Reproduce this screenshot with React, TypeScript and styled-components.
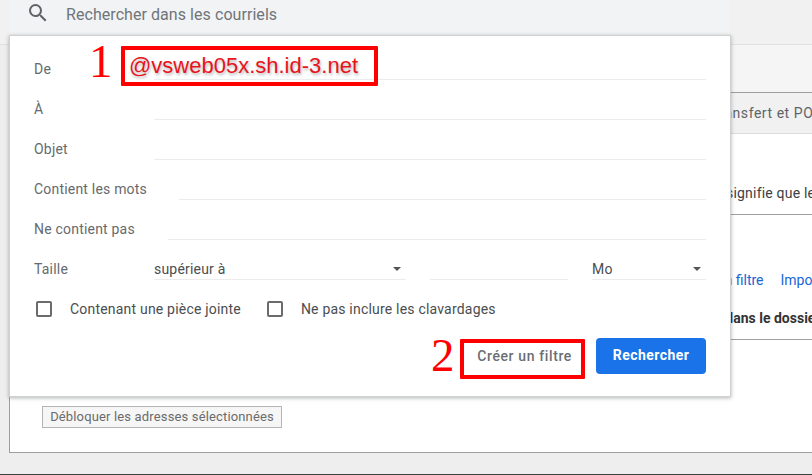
import React from 'react';
import styled, { createGlobalStyle } from 'styled-components';

const GlobalStyle = createGlobalStyle`
	html, body {
		margin: 0;
		padding: 0;
		background: #eeeeee;
		overflow: hidden;
	}
	* {
		box-sizing: border-box;
	}
`;

const SearchIcon = () => (
	<svg width="24" height="24" viewBox="0 0 24 24" fill="#5f6368">
		<path d="M15.5 14h-.79l-.28-.27A6.47 6.47 0 0 0 16 9.5 6.5 6.5 0 1 0 9.5 16c1.61 0 3.09-.59 4.23-1.57l.27.28v.79l5 4.99L20.49 19l-4.99-5zm-6 0C7.01 14 5 11.99 5 9.5S7.01 5 9.5 5 14 7.01 14 9.5 11.99 14 9.5 14z" />
	</svg>
);

const App = () => {
	return (
		<Page>
			<GlobalStyle />
			<TopBand>
				<SearchBar>
					<SearchIcon />
					<SearchText>Rechercher dans les courriels</SearchText>
				</SearchBar>
			</TopBand>
			<HeaderBand />
			<TabRow>
				<TabLabel>Transfert et POP</TabLabel>
			</TabRow>
			<SettingsCard>
				<InfoRow>
					<InfoText>Cela signifie que les messages</InfoText>
				</InfoRow>
				<FilterLinks>
					<LinkText>Créer un filtre</LinkText>
					<LinkText>Importer des filtres</LinkText>
				</FilterLinks>
				<BoldRow>
					<BoldText>Les messages sont placés dans le dossier</BoldText>
				</BoldRow>
				<UnblockArea>
					<UnblockButton>Débloquer les adresses sélectionnées</UnblockButton>
				</UnblockArea>
			</SettingsCard>
			<BottomBar />

			<Popup>
				<FormRow>
					<FieldLabel>De</FieldLabel>
					<FieldLine $left={120} />
				</FormRow>
				<FormRow>
					<FieldLabel>À</FieldLabel>
					<FieldLine $left={120} />
				</FormRow>
				<FormRow>
					<FieldLabel>Objet</FieldLabel>
					<FieldLine $left={120} />
				</FormRow>
				<FormRow>
					<FieldLabel>Contient les mots</FieldLabel>
					<FieldLine $left={145} />
				</FormRow>
				<FormRow>
					<FieldLabel>Ne contient pas</FieldLabel>
					<FieldLine $left={134} />
				</FormRow>
				<FormRow>
					<FieldLabel>Taille</FieldLabel>
					<SizeFields>
						<SelectBox $width={252}>
							supérieur à
							<Caret />
						</SelectBox>
						<SizeInput />
						<SelectBox $width={114}>
							Mo
							<Caret />
						</SelectBox>
					</SizeFields>
				</FormRow>
				<CheckRow>
					<CheckBox />
					<CheckLabel>Contenant une pièce jointe</CheckLabel>
					<CheckBox />
					<CheckLabel>Ne pas inclure les clavardages</CheckLabel>
				</CheckRow>
				<ActionRow>
					<CreateFilter>Créer un filtre</CreateFilter>
					<SearchButton>Rechercher</SearchButton>
				</ActionRow>
			</Popup>

			<Numeral $x={89} $y={34} $size={47}>1</Numeral>
			<RedBox $x={121} $y={46} $w={257} $h={40} />
			<Address>@vsweb05x.sh.id-3.net</Address>
			<Numeral $x={431} $y={328} $size={47}>2</Numeral>
			<RedBox $x={460} $y={339} $w={125} $h={40} />
		</Page>
	);
};

export default App;

const Page = styled.div({
	position: 'relative',
	width: '812px',
	height: '475px',
	overflow: 'hidden',
	background: '#eeeeee',
	borderBottom: '1px solid #3c4043',
	fontFamily: 'Roboto, "Liberation Sans", sans-serif',
	display: 'flex',
	flexDirection: 'column',
});

const TopBand = styled.div({
	height: '45px',
	flexShrink: 0,
	paddingLeft: '9px',
	background: '#f1f1f1',
	borderBottom: '1px solid #e0e0e0',
});

const SearchBar = styled.div({
	width: '721px',
	height: '44px',
	background: '#f1f3f4',
	display: 'flex',
	alignItems: 'flex-start',
	paddingLeft: '17px',
	paddingTop: '1px',
	gap: '16px',
});

const SearchText = styled.span({
	fontSize: '16px',
	lineHeight: '27px',
	color: '#70757a',
	letterSpacing: '0.06px',
});

const HeaderBand = styled.div({
	height: '48px',
	flexShrink: 0,
	marginLeft: '9px',
	background: '#f5f5f5',
	borderBottom: '1px solid #9e9e9e',
});

const TabRow = styled.div({
	height: '41px',
	flexShrink: 0,
	marginLeft: '9px',
	background: '#f1f1f1',
	borderBottom: '1px solid #dcdcdc',
	display: 'flex',
	alignItems: 'center',
	paddingLeft: '702px',
});

const TabLabel = styled.span({
	fontSize: '14px',
	whiteSpace: 'nowrap',
	color: '#5f6368',
	letterSpacing: '0.55px',
});

const SettingsCard = styled.div({
	height: '319px',
	flexShrink: 0,
	marginLeft: '9px',
	background: '#ffffff',
	borderBottom: '1px solid #9e9e9e',
	borderLeft: '1px solid #9e9e9e',
	display: 'flex',
	flexDirection: 'column',
});

const InfoRow = styled.div({
	height: '81px',
	flexShrink: 0,
	paddingLeft: '684px',
	paddingTop: '49px',
	borderBottom: '1px solid #a0a0a0',
});

const InfoText = styled.span({
	fontSize: '14px',
	lineHeight: '20px',
	whiteSpace: 'nowrap',
	color: '#3c4043',
	letterSpacing: '0.2px',
	display: 'block',
});

const FilterLinks = styled.div({
	height: '60px',
	flexShrink: 0,
	paddingLeft: '670px',
	paddingTop: '55px',
	display: 'flex',
	gap: '17px',
	whiteSpace: 'nowrap',
});

const LinkText = styled.span({
	fontSize: '14px',
	lineHeight: '20px',
	color: '#1a64d6',
});

const BoldRow = styled.div({
	height: '65px',
	flexShrink: 0,
	paddingLeft: '546px',
	paddingTop: '33px',
	borderBottom: '1px solid #a0a0a0',
	whiteSpace: 'nowrap',
});

const BoldText = styled.span({
	fontSize: '14px',
	lineHeight: '20px',
	fontWeight: 700,
	color: '#333333',
});

const UnblockArea = styled.div({
	flex: 1,
	paddingLeft: '32px',
	paddingTop: '66px',
});

const UnblockButton = styled.div({
	width: '240px',
	height: '22px',
	background: '#f6f6f6',
	border: '1px solid #b4b4b4',
	fontSize: '13px',
	lineHeight: '20px',
	textAlign: 'center',
	color: '#6b6b6b',
	letterSpacing: '0.15px',
	whiteSpace: 'nowrap',
});

const BottomBar = styled.div({
	flex: 1,
	background: '#eeeeee',
});

const Popup = styled.div({
	position: 'absolute',
	left: '9px',
	top: '35px',
	width: '722px',
	height: '362px',
	background: '#ffffff',
	border: '1px solid #d0d0d0',
	boxShadow: '0 1px 4px rgba(60, 64, 67, 0.4)',
	padding: '4px 24px 0 24px',
	display: 'flex',
	flexDirection: 'column',
});

const FormRow = styled.div({
	height: '40px',
	flexShrink: 0,
	position: 'relative',
	display: 'flex',
	alignItems: 'flex-end',
});

const FieldLabel = styled.span({
	position: 'absolute',
	left: 0,
	top: '19px',
	fontSize: '14px',
	lineHeight: '20px',
	color: '#666a6e',
	letterSpacing: '0.2px',
	whiteSpace: 'nowrap',
});

const FieldLine = styled.div<{ $left: number }>(({ $left }) => ({
	marginLeft: `${$left}px`,
	flex: 1,
	height: '1px',
	background: '#ececec',
}));

const SizeFields = styled.div({
	marginLeft: '120px',
	flex: 1,
	display: 'flex',
	alignItems: 'flex-end',
});

const SelectBox = styled.div<{ $width: number }>(({ $width }) => ({
	width: `${$width}px`,
	height: '21px',
	position: 'relative',
	borderBottom: '1px solid #ececec',
	fontSize: '14px',
	lineHeight: '20px',
	color: '#4a4d50',
	letterSpacing: '0.2px',
}));

const Caret = styled.span({
	position: 'absolute',
	right: '5px',
	top: '8px',
	width: 0,
	height: 0,
	borderLeft: '4px solid transparent',
	borderRight: '4px solid transparent',
	borderTop: '4px solid #555555',
});

const SizeInput = styled.div({
	width: '138px',
	height: '1px',
	margin: '0 24px',
	background: '#ececec',
});

const CheckRow = styled.div({
	height: '40px',
	flexShrink: 0,
	display: 'flex',
	alignItems: 'center',
	margin: '9px 0 0 2px',
});

const CheckBox = styled.span({
	width: '16px',
	height: '16px',
	flexShrink: 0,
	border: '2px solid #6b6b6b',
	borderRadius: '2px',
	marginRight: '18px',
});

const CheckLabel = styled.span({
	fontSize: '14px',
	lineHeight: '20px',
	color: '#4a4d50',
	letterSpacing: '0.2px',
	marginRight: '26px',
	whiteSpace: 'nowrap',
});

const ActionRow = styled.div({
	marginTop: '9px',
	display: 'flex',
	justifyContent: 'flex-end',
	alignItems: 'center',
	gap: '24px',
});

const CreateFilter = styled.span({
	fontSize: '14px',
	fontWeight: 500,
	color: '#6a6e72',
	letterSpacing: '0.62px',
	whiteSpace: 'nowrap',
});

const SearchButton = styled.div({
	width: '110px',
	height: '36px',
	background: '#1a73e8',
	borderRadius: '4px',
	color: '#ffffff',
	fontSize: '14px',
	fontWeight: 700,
	lineHeight: '35px',
	textAlign: 'center',
	letterSpacing: '0.45px',
});

const Numeral = styled.span<{ $x: number; $y: number; $size: number }>(({ $x, $y, $size }) => ({
	position: 'absolute',
	left: `${$x}px`,
	top: `${$y}px`,
	fontFamily: '"Liberation Serif", serif',
	fontSize: `${$size}px`,
	lineHeight: '54px',
	color: '#ff0000',
}));

const RedBox = styled.div<{ $x: number; $y: number; $w: number; $h: number }>(({ $x, $y, $w, $h }) => ({
	position: 'absolute',
	left: `${$x}px`,
	top: `${$y}px`,
	width: `${$w}px`,
	height: `${$h}px`,
	border: '4px solid #ff0000',
	borderRadius: '1px',
}));

const Address = styled.span({
	position: 'absolute',
	left: '129px',
	top: '52px',
	fontFamily: '"Liberation Sans", Arial, sans-serif',
	fontSize: '22px',
	lineHeight: '28px',
	color: '#e8141c',
	textShadow: '1px 2px 3px rgba(0, 0, 0, 0.3)',
	whiteSpace: 'nowrap',
});
